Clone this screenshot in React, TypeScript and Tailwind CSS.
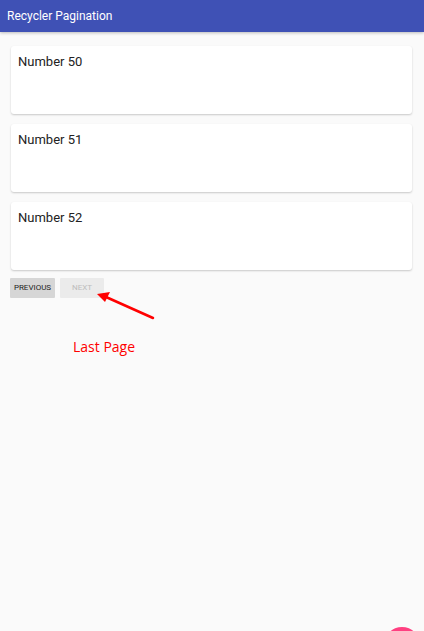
import React from 'react';

const items = [50, 51, 52];

export default function App() {
  return (
    <div className="relative h-[631px] w-[424px] overflow-hidden bg-[#fafafa] font-['Roboto',sans-serif]">
      <header className="flex h-[32px] items-center bg-[#3f51b5] px-[7px] text-[12px] text-white shadow-[0_1px_3px_rgba(0,0,0,0.25)]">
        Recycler Pagination
      </header>

      <div className="flex flex-col gap-[10px] pl-[11px] pr-[12px] pt-[14px]">
        {items.map((n) => (
          <div
            key={n}
            className="h-[68px] rounded-[3px] bg-white px-[7px] pt-[6px] text-[13px] text-[#222] shadow-[0_1px_2px_rgba(0,0,0,0.2)]"
          >
            Number {n}
          </div>
        ))}
      </div>

      <div className="flex gap-[5px] px-[10px] pt-[8px]">
        <button className="flex h-[20px] w-[45px] items-center justify-center rounded-[1px] bg-[#d6d6d6] text-[8px] text-[#222]">
          PREVIOUS
        </button>
        <button className="flex h-[20px] w-[44px] items-center justify-center rounded-[1px] bg-[#ebebeb] text-[8px] text-[#bdbdbd]">
          NEXT
        </button>
      </div>

      <svg className="absolute left-[94px] top-[290px]" width="64" height="34" viewBox="0 0 64 34">
        <line x1="59" y1="28" x2="12" y2="7" stroke="#f00" strokeWidth="2.5" strokeLinecap="round" />
        <polygon points="3,4 16,2 11,12" fill="#f00" />
      </svg>

      <div className="pl-[73px] pt-[38px] font-['Open_Sans',sans-serif] text-[14px] text-[#ff0000]">
        Last Page
      </div>

      <div className="absolute left-[384px] top-[627px] h-[36px] w-[36px] rounded-full bg-[#ff4081]" />
    </div>
  );
}
